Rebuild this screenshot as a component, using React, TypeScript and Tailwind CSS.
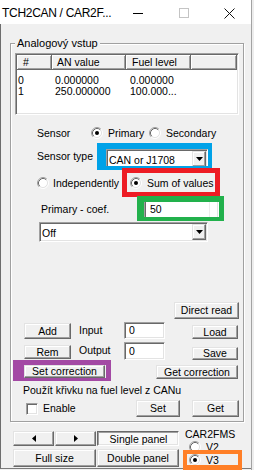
import React from "react";

const raised =
  "border border-t-[#e3e3e3] border-l-[#e3e3e3] border-r-[#696969] border-b-[#696969] bg-[#f0f0f0] shadow-[inset_-1px_-1px_0_#a0a0a0,inset_1px_1px_0_#ffffff]";
const sunken =
  "border border-t-[#a0a0a0] border-l-[#a0a0a0] border-r-white border-b-white bg-white shadow-[inset_1px_1px_0_#696969,inset_-1px_-1px_0_#e3e3e3]";
const pressed =
  "border border-t-[#696969] border-l-[#696969] border-r-white border-b-white bg-[#f9f9f9] shadow-[inset_1px_1px_0_#a0a0a0,inset_-1px_-1px_0_#e3e3e3] pt-[1px] pl-[1px]";
const hdr =
  "flex h-full shrink-0 items-center border-r border-b border-r-[#696969] border-b-[#696969] bg-[#f0f0f0] shadow-[inset_1px_1px_0_#ffffff,inset_-1px_-1px_0_#a0a0a0]";

function Btn({
  children,
  className,
  down,
}: {
  children?: React.ReactNode;
  className?: string;
  down?: boolean;
}) {
  return (
    <div
      className={`${down ? pressed : raised} flex shrink-0 items-center justify-center whitespace-nowrap ${className ?? ""}`}
    >
      {children}
    </div>
  );
}

function Radio({ checked }: { checked?: boolean }) {
  return (
    <svg width="12" height="12" viewBox="0 0 12 12" className="shrink-0">
      <circle cx="6" cy="6" r="4.5" fill="#ffffff" />
      <path d="M2.11 9.89A5.5 5.5 0 0 1 9.89 2.11" fill="none" stroke="#a0a0a0" strokeWidth="1" />
      <path d="M9.89 2.11A5.5 5.5 0 0 1 2.11 9.89" fill="none" stroke="#ffffff" strokeWidth="1" />
      <path d="M2.82 9.18A4.5 4.5 0 0 1 9.18 2.82" fill="none" stroke="#696969" strokeWidth="1" />
      <path d="M9.18 2.82A4.5 4.5 0 0 1 2.82 9.18" fill="none" stroke="#e3e3e3" strokeWidth="1" />
      {checked && <circle cx="6" cy="6" r="2" fill="#000000" />}
    </svg>
  );
}

function DownArrow() {
  return (
    <svg width="7" height="4" viewBox="0 0 7 4">
      <path d="M0 0h7L3.5 4z" fill="#000000" />
    </svg>
  );
}

function Combo({ text, className }: { text: string; className?: string }) {
  return (
    <div className={`${sunken} flex shrink-0 p-[1px] ${className ?? ""}`}>
      <div className="flex-1 pl-[1px] pt-[1px] leading-[16px]">{text}</div>
      <div className={`${raised} flex w-[14px] items-center justify-center`}>
        <DownArrow />
      </div>
    </div>
  );
}

const rows = [
  ["0", "0.000000", "0.000000"],
  ["1", "250.000000", "100.000..."],
];

export default function App() {
  return (
    <div className="relative flex h-[470px] w-[254px] overflow-hidden bg-[#f0f0f0] font-['Liberation_Sans',Arial,sans-serif] text-[10.5px] leading-[13px] text-black">
      <div className="flex h-[470px] w-[251px] shrink-0 flex-col">
        {/* Title bar */}
        <div className="flex h-[24px] w-full shrink-0 items-start bg-white">
          <span className="w-[131px] pl-[2px] pt-[2px] text-[12px] leading-[22px] tracking-[-0.3px] whitespace-nowrap">
            TCH2CAN / CAR2F...
          </span>
          <div className="ml-[2px] mt-[13px] h-[1px] w-[10px] bg-black" />
          <div className="ml-[36px] mt-[8px] h-[10px] w-[10px] border border-[#c4c4c4]" />
          <svg className="ml-[35px] mt-[8px]" width="11" height="11" viewBox="0 0 11 11">
            <path d="M0.5 0.5L10.5 10.5M10.5 0.5L0.5 10.5" stroke="#111111" strokeWidth="1" fill="none" />
          </svg>
        </div>

        {/* Client */}
        <div className="flex h-[445px] flex-col border-b border-l border-b-[#7a7a7a] border-l-[#6e6e6e]">
          {/* Group box */}
          <div className="relative ml-[9px] mt-[19px] flex h-[379px] w-[234px] shrink-0 flex-col border border-[#a0a0a0] shadow-[inset_1px_1px_0_#ffffff,1px_1px_0_#ffffff]">
            <span className="absolute -top-[7px] left-[4px] bg-[#f0f0f0] px-[2px] text-[11px] leading-[13px]">
              Analogový vstup
            </span>

            {/* List view */}
            <div className={`${sunken} ml-[4px] mt-[9px] flex h-[62px] w-[224px] shrink-0 flex-col overflow-hidden p-[1px]`}>
              <div className="flex h-[15px] shrink-0">
                <div className={`${hdr} w-[35px] pl-[6px]`}>#</div>
                <div className={`${hdr} w-[74px] pl-[5px]`}>AN value</div>
                <div className={`${hdr} w-[65px] pl-[6px]`}>Fuel level</div>
                <div className={`${hdr} flex-1`} />
              </div>
              <div className="pt-[4.5px]">
                {rows.map((r) => (
                  <div key={r[0]} className="flex h-[11px] leading-[11px] whitespace-nowrap">
                    <div className="w-[35px] pl-[1px]">{r[0]}</div>
                    <div className="w-[74px] pl-[3px]">{r[1]}</div>
                    <div className="w-[65px] pl-[4px]">{r[2]}</div>
                  </div>
                ))}
              </div>
            </div>

            {/* Sensor */}
            <div className="ml-[26px] mt-[11px] flex h-[14px] shrink-0 items-center whitespace-nowrap">
              <span className="w-[54px]">Sensor</span>
              <div className="flex w-[58px] items-center gap-[5px]">
                <Radio checked />
                <span>Primary</span>
              </div>
              <div className="flex items-center gap-[5px]">
                <Radio />
                <span>Secondary</span>
              </div>
            </div>

            {/* Sensor type */}
            <div className="ml-[26px] mt-[9px] flex h-[20px] shrink-0 items-center whitespace-nowrap">
              <span className="mb-[6px] w-[69px]">Sensor type</span>
              <Combo text="CAN or J1708" className="h-[20px] w-[102px]" />
            </div>

            {/* Independently / Sum */}
            <div className="ml-[26px] mt-[7px] flex h-[14px] shrink-0 items-center whitespace-nowrap">
              <div className="flex w-[93px] items-center gap-[4px]">
                <Radio />
                <span>Independently</span>
              </div>
              <div className="flex items-center gap-[5px]">
                <Radio checked />
                <span>Sum of values</span>
              </div>
            </div>

            {/* Primary coef */}
            <div className="ml-[30px] mt-[9px] flex h-[20px] shrink-0 items-center whitespace-nowrap">
              <span className="w-[103px]">Primary - coef.</span>
              <div className={`${sunken} flex h-[20px] w-[75px] items-center pl-[5px]`}>
                <span className="flex-1">50</span>
                <div className="mr-[8px] h-full w-[1px] bg-[#ececec]" />
              </div>
            </div>

            {/* Off combo */}
            <Combo text="Off" className="ml-[28px] mt-[3px] h-[20px] w-[169px]" />

            {/* Direct read */}
            <Btn className="ml-[163px] mt-[60px] h-[17px] w-[65px]">Direct read</Btn>

            {/* Add / Input / Load */}
            <div className="ml-[13px] mt-[2px] flex shrink-0 items-start whitespace-nowrap">
              <Btn className="mt-[2px] h-[16px] w-[47px]">Add</Btn>
              <span className="ml-[8px] mt-[3px] w-[45px]">Input</span>
              <div className={`${sunken} mt-[1px] flex h-[17px] w-[41px] items-center pl-[4px]`}>0</div>
              <Btn className="ml-[27px] mt-[4px] h-[14px] w-[46px]">Load</Btn>
            </div>

            {/* Rem / Output / Save */}
            <div className="ml-[13px] mt-[3px] flex shrink-0 items-start whitespace-nowrap">
              <Btn className="mt-[3px] h-[14px] w-[47px]">Rem</Btn>
              <span className="ml-[8px] mt-[2px] w-[45px]">Output</span>
              <div className={`${sunken} flex h-[18px] w-[41px] items-center pl-[4px]`}>0</div>
              <Btn className="ml-[27px] mt-[5px] h-[13px] w-[46px]">Save</Btn>
            </div>

            {/* Set / Get correction */}
            <div className="ml-[13px] mt-[5px] flex shrink-0 items-start">
              <Btn className="h-[13px] w-[81px]">Set correction</Btn>
              <Btn className="ml-[51px] h-[14px] w-[82px]">Get correction</Btn>
            </div>

            <span className="ml-[12px] mt-[5px] whitespace-nowrap">Použít křivku na fuel level z CANu</span>

            {/* Enable row */}
            <div className="ml-[15px] mt-[3px] flex h-[17px] shrink-0 items-center">
              <div className={`${sunken} h-[12px] w-[12px] shrink-0`} />
              <span className="ml-[5px] w-[93px]">Enable</span>
              <Btn className="h-[17px] w-[44px]">Set</Btn>
              <Btn className="ml-[12px] h-[17px] w-[47px]">Get</Btn>
            </div>
          </div>

          {/* Bottom area */}
          <div className="ml-[12px] mt-[5px] flex">
            <div className="mt-[4px] flex flex-col gap-[3px]">
              <div className="flex gap-[1px]">
                <Btn className="h-[15px] w-[41px]">
                  <svg width="4" height="7" viewBox="0 0 4 7">
                    <path d="M4 0v7L0 3.5z" fill="#000000" />
                  </svg>
                </Btn>
                <Btn className="h-[15px] w-[41px]">
                  <svg width="4" height="7" viewBox="0 0 4 7">
                    <path d="M0 0v7l4-3.5z" fill="#000000" />
                  </svg>
                </Btn>
                <Btn down className="h-[15px] w-[82px]">
                  Single panel
                </Btn>
              </div>
              <div className="flex gap-[1px]">
                <Btn className="h-[18px] w-[83px]">Full size</Btn>
                <Btn className="h-[18px] w-[82px]">Double panel</Btn>
              </div>
            </div>
            <div className="ml-[6px] flex flex-col pt-[0.5px] whitespace-nowrap">
              <span className="h-[13px]">CAR2FMS</span>
              <div className="flex h-[13px] items-center gap-[5px] pl-[4px]">
                <Radio />
                <span>V2</span>
              </div>
              <div className="flex h-[13px] items-center gap-[5px] pl-[4px]">
                <Radio checked />
                <span>V3</span>
              </div>
            </div>
          </div>
        </div>
      </div>
      <div className="h-full w-[1px] shrink-0 bg-[#a3a3a3]" />
      <div className="h-full flex-1 bg-[#ededed]" />

      {/* Annotation overlays */}
      <div className="pointer-events-none absolute left-[97px] top-[143px] h-[27px] w-[115px] border-t-[6px] border-l-[9px] border-r-[4px] border-b-[4px] border-[#00a2e8]" />
      <div className="pointer-events-none absolute left-[122px] top-[168px] h-[29px] w-[98px] border-[5px] border-[#ed1c24]" />
      <div className="pointer-events-none absolute left-[137px] top-[196px] h-[25px] w-[87px] border-t-[6px] border-l-[7px] border-r-[5px] border-b-[4px] border-[#22b14c]" />
      <div className="pointer-events-none absolute left-[13px] top-[360px] h-[21px] w-[98px] border-t-[5px] border-l-[11px] border-r-[5px] border-b-[3px] border-[#a349a4]" />
      <div className="pointer-events-none absolute left-[183px] top-[450px] h-[20px] w-[59px] border-[4px] border-b-[5px] border-[#ff7f27]" />
    </div>
  );
}
